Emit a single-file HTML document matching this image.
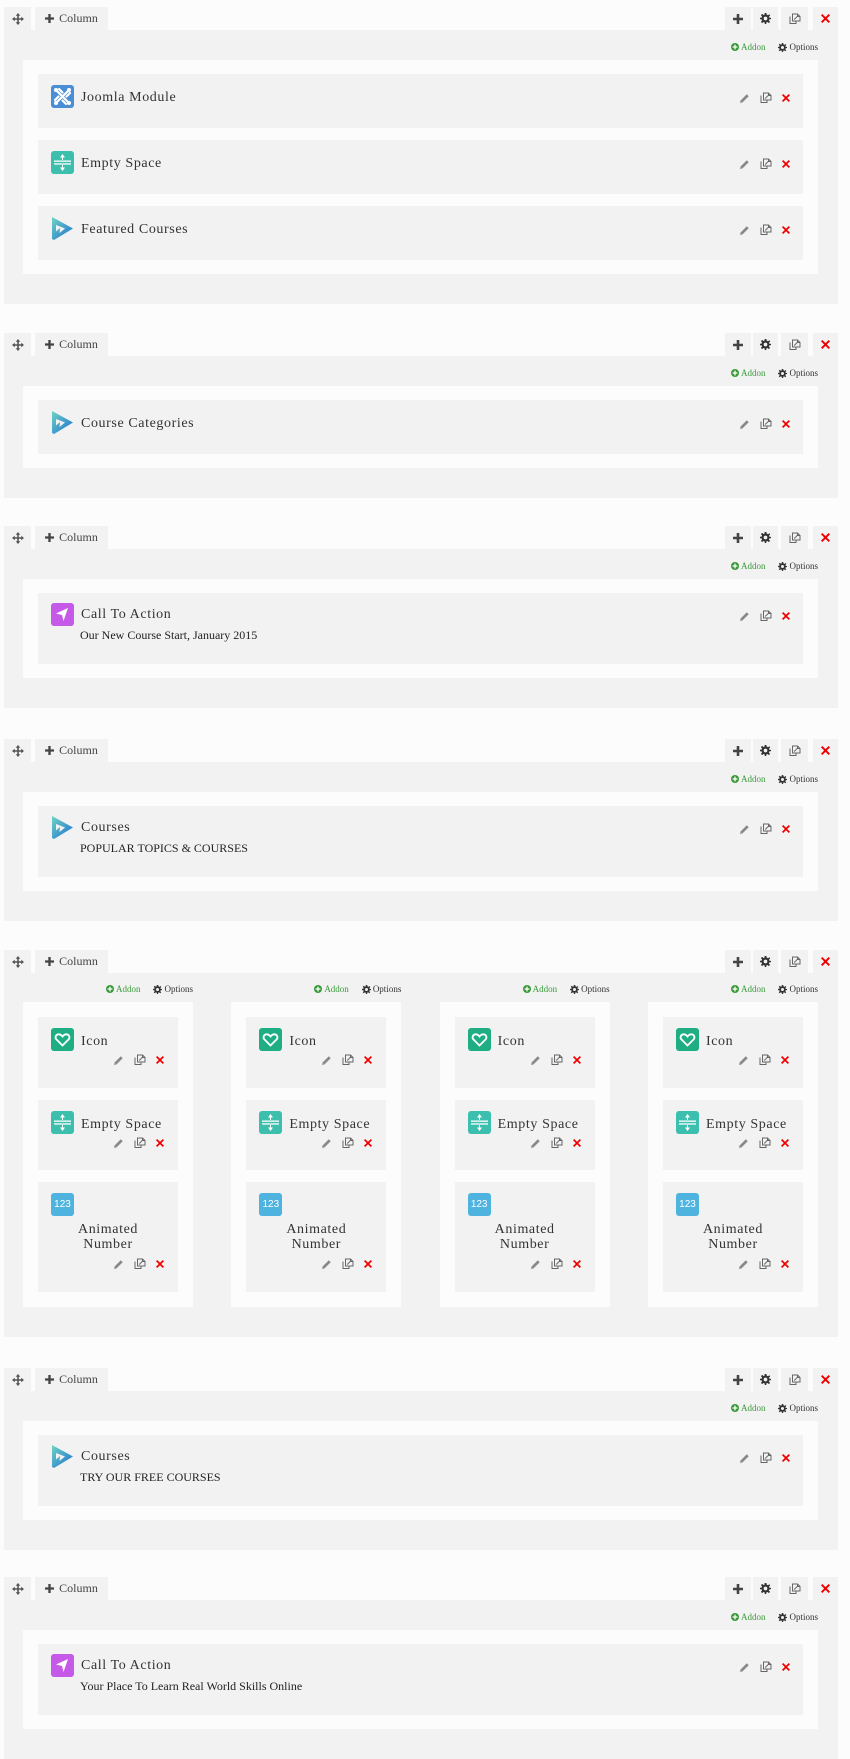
<!DOCTYPE html>
<html><head><meta charset="utf-8">
<style>
*{margin:0;padding:0;box-sizing:border-box}
body{width:850px;height:1758px;background:#fcfcfc;position:relative;overflow:hidden;font-family:"Liberation Serif",serif;color:#333}
.sec{position:absolute;left:0;width:850px}
.tab{position:absolute;top:0;height:23px;background:#f2f2f2;display:flex;align-items:center;justify-content:center;font-size:12px;color:#444}
.panel{position:absolute;left:4px;top:23px;width:834px;background:#f2f2f2;padding:30px 20px 30px 19px}
.ar{position:absolute;right:20px;top:12px;font-size:9px;display:flex;gap:13px;align-items:center;white-space:nowrap}
.ar span{display:flex;align-items:center;gap:2px}
.ad{color:#3a9a3a}
.wb{background:#fcfcfc;padding:14px 15px}
.it{position:relative;background:#f2f2f2;height:54px;margin-bottom:12px}
.it:last-child{margin-bottom:0}
.it.s{height:71px}
.ico{position:absolute;left:13px;top:11px;width:23px;height:23px}
.t{position:absolute;left:43px;top:16px;font-size:14px;letter-spacing:.6px;line-height:16px;white-space:nowrap}
.it.s .t{top:14px}
.sub{position:absolute;left:42px;top:35px;font-size:12px;line-height:14px;white-space:nowrap;color:#222}
.acts{position:absolute;right:13px;top:18px;display:flex;gap:10px;align-items:center}
.it.s .acts{top:17px}
.cols{display:flex;justify-content:space-between}
.col{position:relative;width:170px}
.col .ar{right:0;top:-18px}
.col .it{height:71px}
.col .t{top:17px}
.col .acts{right:14px;top:37px}
.col .it.n{height:110px}
.an{position:absolute;left:0;right:0;top:40px;text-align:center;font-size:14px;letter-spacing:.6px;line-height:15px}
.col .it.n .acts{top:76px}
</style></head><body>
<svg width="0" height="0" style="position:absolute">
<defs>
<symbol id="mv" viewBox="0 0 12 12"><path d="M6 0L8.3 2.8H6.8V5.2H9.2V3.7L12 6L9.2 8.3V6.8H6.8V9.2H8.3L6 12L3.7 9.2H5.2V6.8H2.8V8.3L0 6L2.8 3.7V5.2H5.2V2.8H3.7Z" fill="#555"/></symbol>
<symbol id="pl" viewBox="0 0 10 10"><path d="M3.7 0H6.3V3.7H10V6.3H6.3V10H3.7V6.3H0V3.7H3.7Z" fill="#444"/></symbol>
<symbol id="gr" viewBox="0 0 12 12"><path d="M5 0H7L7.3 1.8L8.8 2.5L10.2 1.3L11.1 2.7L9.8 4L10.2 5.2L12 5.3V6.7L10.2 7L9.7 8.3L11 9.7L9.7 11L8.3 9.8L7 10.2L6.8 12H5.2L5 10.2L3.7 9.8L2.3 11L1 9.7L2.2 8.3L1.8 7L0 6.8V5.2L1.8 5L2.2 3.7L1 2.3L2.3 1L3.7 2.2L5 1.8Z M6 4A2 2 0 1 0 6 8A2 2 0 1 0 6 4Z" fill="#333" fill-rule="evenodd"/></symbol>
<symbol id="cp" viewBox="0 0 12 12"><path d="M1 3.5V10.5H7V8M3.5 1H8.5L11 3.5V8H3.5ZM8.5 1V3.5H11" fill="none" stroke="#666" stroke-width="1"/><path d="M5.2 6.5L8.5 3.2" stroke="#666"/></symbol>
<symbol id="pe" viewBox="0 0 12 12"><path d="M1 11L1.6 8.3L8.5 1.4L10.6 3.5L3.7 10.4Z" fill="#888"/><path d="M1 11L1.6 8.3L3.7 10.4Z" fill="#aaa"/></symbol>
<symbol id="xx" viewBox="0 0 10 10"><path d="M1.5 0L5 3.5L8.5 0L10 1.5L6.5 5L10 8.5L8.5 10L5 6.5L1.5 10L0 8.5L3.5 5L0 1.5Z" fill="#e00"/></symbol>
<symbol id="ad" viewBox="0 0 10 10"><circle cx="5" cy="5" r="5" fill="#3a9a3a"/><path d="M4.2 2H5.8V4.2H8V5.8H5.8V8H4.2V5.8H2V4.2H4.2Z" fill="#fff"/></symbol>
<symbol id="jm" viewBox="0 0 23 23"><rect width="23" height="23" rx="3" fill="#4a8fd6"/><g stroke="#fff" stroke-width="2.2" fill="none" stroke-linecap="round"><path d="M6 6L17 17M17 6L6 17M8 4L11.5 7.5M19 8L15.5 11.5M15 19L11.5 15.5M4 15L7.5 11.5"/></g><g fill="#fff"><circle cx="5" cy="5" r="2"/><circle cx="18" cy="5" r="2"/><circle cx="5" cy="18" r="2"/><circle cx="18" cy="18" r="2"/></g></symbol>
<symbol id="es" viewBox="0 0 23 23"><rect width="23" height="23" rx="3" fill="#3dbfae"/><g fill="#fff"><rect x="3" y="9.5" width="17" height="1.3"/><rect x="3" y="12.3" width="17" height="1.3"/><path d="M11.5 3L14 6.5H9Z M11.5 20L14 16.5H9Z"/><rect x="11" y="6" width="1" height="3"/><rect x="11" y="14" width="1" height="3"/></g></symbol>
<symbol id="fc" viewBox="0 0 23 23"><defs><linearGradient id="g1" x1="0" y1="0" x2="1" y2="1"><stop offset="0" stop-color="#6fd4c4"/><stop offset="1" stop-color="#1d6fd0"/></linearGradient></defs><path d="M1 0L22 11.5L3 23L1 22Z M5 8V14.5L9 11L8.5 16L14 11.5Z" fill="url(#g1)" fill-rule="evenodd"/></symbol>
<symbol id="ca" viewBox="0 0 23 23"><rect width="23" height="23" rx="3" fill="#c65ae8"/><path d="M17 5L5 10.5L11 12L12.5 18Z" fill="#fff"/></symbol>
<symbol id="ht" viewBox="0 0 23 23"><rect width="23" height="23" rx="3" fill="#1fae84"/><path d="M11.5 17.5L5.5 11.5C3.8 9.8 4.5 6.5 7.5 6.3C9.3 6.2 10.6 7.3 11.5 8.5C12.4 7.3 13.7 6.2 15.5 6.3C18.5 6.5 19.2 9.8 17.5 11.5Z" fill="none" stroke="#fff" stroke-width="1.8"/></symbol>
</defs></svg>

<div class="sec" style="top:7px">
<div class="tab" style="left:4px;width:27px"><svg width="12" height="12"><use href="#mv"/></svg></div>
<div class="tab" style="left:35px;width:73px;gap:5px"><svg width="9" height="9"><use href="#pl"/></svg>Column</div>
<div class="tab" style="left:725px;width:26px"><svg width="10" height="10"><use href="#pl"/></svg></div>
<div class="tab" style="left:753px;width:25px"><svg width="11" height="11"><use href="#gr"/></svg></div>
<div class="tab" style="left:781px;width:27px"><svg width="12" height="12"><use href="#cp"/></svg></div>
<div class="tab" style="left:813px;width:25px"><svg width="9" height="9"><use href="#xx"/></svg></div>
<div class="panel"><div class="ar"><span class="ad"><svg width="8" height="8"><use href="#ad"/></svg>Addon</span><span><svg width="9" height="9"><use href="#gr"/></svg>Options</span></div>
<div class="wb">
<div class="it"><svg class="ico"><use href="#jm"/></svg><div class="t">Joomla Module</div><div class="acts"><svg width="11" height="11"><use href="#pe"/></svg><svg width="12" height="12"><use href="#cp"/></svg><svg width="8" height="8"><use href="#xx"/></svg></div></div>
<div class="it"><svg class="ico"><use href="#es"/></svg><div class="t">Empty Space</div><div class="acts"><svg width="11" height="11"><use href="#pe"/></svg><svg width="12" height="12"><use href="#cp"/></svg><svg width="8" height="8"><use href="#xx"/></svg></div></div>
<div class="it"><svg class="ico"><use href="#fc"/></svg><div class="t">Featured Courses</div><div class="acts"><svg width="11" height="11"><use href="#pe"/></svg><svg width="12" height="12"><use href="#cp"/></svg><svg width="8" height="8"><use href="#xx"/></svg></div></div>
</div></div></div>

<div class="sec" style="top:333px">
<div class="tab" style="left:4px;width:27px"><svg width="12" height="12"><use href="#mv"/></svg></div>
<div class="tab" style="left:35px;width:73px;gap:5px"><svg width="9" height="9"><use href="#pl"/></svg>Column</div>
<div class="tab" style="left:725px;width:26px"><svg width="10" height="10"><use href="#pl"/></svg></div>
<div class="tab" style="left:753px;width:25px"><svg width="11" height="11"><use href="#gr"/></svg></div>
<div class="tab" style="left:781px;width:27px"><svg width="12" height="12"><use href="#cp"/></svg></div>
<div class="tab" style="left:813px;width:25px"><svg width="9" height="9"><use href="#xx"/></svg></div>
<div class="panel"><div class="ar"><span class="ad"><svg width="8" height="8"><use href="#ad"/></svg>Addon</span><span><svg width="9" height="9"><use href="#gr"/></svg>Options</span></div>
<div class="wb">
<div class="it"><svg class="ico"><use href="#fc"/></svg><div class="t">Course Categories</div><div class="acts"><svg width="11" height="11"><use href="#pe"/></svg><svg width="12" height="12"><use href="#cp"/></svg><svg width="8" height="8"><use href="#xx"/></svg></div></div>
</div></div></div>

<div class="sec" style="top:526px">
<div class="tab" style="left:4px;width:27px"><svg width="12" height="12"><use href="#mv"/></svg></div>
<div class="tab" style="left:35px;width:73px;gap:5px"><svg width="9" height="9"><use href="#pl"/></svg>Column</div>
<div class="tab" style="left:725px;width:26px"><svg width="10" height="10"><use href="#pl"/></svg></div>
<div class="tab" style="left:753px;width:25px"><svg width="11" height="11"><use href="#gr"/></svg></div>
<div class="tab" style="left:781px;width:27px"><svg width="12" height="12"><use href="#cp"/></svg></div>
<div class="tab" style="left:813px;width:25px"><svg width="9" height="9"><use href="#xx"/></svg></div>
<div class="panel"><div class="ar"><span class="ad"><svg width="8" height="8"><use href="#ad"/></svg>Addon</span><span><svg width="9" height="9"><use href="#gr"/></svg>Options</span></div>
<div class="wb">
<div class="it s"><svg class="ico" style="top:10px"><use href="#ca"/></svg><div class="t">Call To Action</div><div class="sub">Our New Course Start, January 2015</div><div class="acts"><svg width="11" height="11"><use href="#pe"/></svg><svg width="12" height="12"><use href="#cp"/></svg><svg width="8" height="8"><use href="#xx"/></svg></div></div>
</div></div></div>

<div class="sec" style="top:739px">
<div class="tab" style="left:4px;width:27px"><svg width="12" height="12"><use href="#mv"/></svg></div>
<div class="tab" style="left:35px;width:73px;gap:5px"><svg width="9" height="9"><use href="#pl"/></svg>Column</div>
<div class="tab" style="left:725px;width:26px"><svg width="10" height="10"><use href="#pl"/></svg></div>
<div class="tab" style="left:753px;width:25px"><svg width="11" height="11"><use href="#gr"/></svg></div>
<div class="tab" style="left:781px;width:27px"><svg width="12" height="12"><use href="#cp"/></svg></div>
<div class="tab" style="left:813px;width:25px"><svg width="9" height="9"><use href="#xx"/></svg></div>
<div class="panel"><div class="ar"><span class="ad"><svg width="8" height="8"><use href="#ad"/></svg>Addon</span><span><svg width="9" height="9"><use href="#gr"/></svg>Options</span></div>
<div class="wb">
<div class="it s"><svg class="ico" style="top:10px"><use href="#fc"/></svg><div class="t">Courses</div><div class="sub">POPULAR TOPICS &amp; COURSES</div><div class="acts"><svg width="11" height="11"><use href="#pe"/></svg><svg width="12" height="12"><use href="#cp"/></svg><svg width="8" height="8"><use href="#xx"/></svg></div></div>
</div></div></div>

<div class="sec" style="top:950px">
<div class="tab" style="left:4px;width:27px"><svg width="12" height="12"><use href="#mv"/></svg></div>
<div class="tab" style="left:35px;width:73px;gap:5px"><svg width="9" height="9"><use href="#pl"/></svg>Column</div>
<div class="tab" style="left:725px;width:26px"><svg width="10" height="10"><use href="#pl"/></svg></div>
<div class="tab" style="left:753px;width:25px"><svg width="11" height="11"><use href="#gr"/></svg></div>
<div class="tab" style="left:781px;width:27px"><svg width="12" height="12"><use href="#cp"/></svg></div>
<div class="tab" style="left:813px;width:25px"><svg width="9" height="9"><use href="#xx"/></svg></div>
<div class="panel" style="padding-top:29px"><div class="cols">
<div class="col"><div class="ar"><span class="ad"><svg width="8" height="8"><use href="#ad"/></svg>Addon</span><span><svg width="9" height="9"><use href="#gr"/></svg>Options</span></div><div class="wb" style="padding:15px">
<div class="it"><svg class="ico"><use href="#ht"/></svg><div class="t">Icon</div><div class="acts"><svg width="11" height="11"><use href="#pe"/></svg><svg width="12" height="12"><use href="#cp"/></svg><svg width="8" height="8"><use href="#xx"/></svg></div></div>
<div class="it" style="height:70px"><svg class="ico"><use href="#es"/></svg><div class="t">Empty Space</div><div class="acts"><svg width="11" height="11"><use href="#pe"/></svg><svg width="12" height="12"><use href="#cp"/></svg><svg width="8" height="8"><use href="#xx"/></svg></div></div>
<div class="it n"><div class="ico" style="background:#4fb3e0;border-radius:3px;color:#fff;font:10px 'Liberation Sans',sans-serif;line-height:23px;text-align:center">123</div><div class="an">Animated<br>Number</div><div class="acts"><svg width="11" height="11"><use href="#pe"/></svg><svg width="12" height="12"><use href="#cp"/></svg><svg width="8" height="8"><use href="#xx"/></svg></div></div>
</div></div>
<div class="col"><div class="ar"><span class="ad"><svg width="8" height="8"><use href="#ad"/></svg>Addon</span><span><svg width="9" height="9"><use href="#gr"/></svg>Options</span></div><div class="wb" style="padding:15px">
<div class="it"><svg class="ico"><use href="#ht"/></svg><div class="t">Icon</div><div class="acts"><svg width="11" height="11"><use href="#pe"/></svg><svg width="12" height="12"><use href="#cp"/></svg><svg width="8" height="8"><use href="#xx"/></svg></div></div>
<div class="it" style="height:70px"><svg class="ico"><use href="#es"/></svg><div class="t">Empty Space</div><div class="acts"><svg width="11" height="11"><use href="#pe"/></svg><svg width="12" height="12"><use href="#cp"/></svg><svg width="8" height="8"><use href="#xx"/></svg></div></div>
<div class="it n"><div class="ico" style="background:#4fb3e0;border-radius:3px;color:#fff;font:10px 'Liberation Sans',sans-serif;line-height:23px;text-align:center">123</div><div class="an">Animated<br>Number</div><div class="acts"><svg width="11" height="11"><use href="#pe"/></svg><svg width="12" height="12"><use href="#cp"/></svg><svg width="8" height="8"><use href="#xx"/></svg></div></div>
</div></div>
<div class="col"><div class="ar"><span class="ad"><svg width="8" height="8"><use href="#ad"/></svg>Addon</span><span><svg width="9" height="9"><use href="#gr"/></svg>Options</span></div><div class="wb" style="padding:15px">
<div class="it"><svg class="ico"><use href="#ht"/></svg><div class="t">Icon</div><div class="acts"><svg width="11" height="11"><use href="#pe"/></svg><svg width="12" height="12"><use href="#cp"/></svg><svg width="8" height="8"><use href="#xx"/></svg></div></div>
<div class="it" style="height:70px"><svg class="ico"><use href="#es"/></svg><div class="t">Empty Space</div><div class="acts"><svg width="11" height="11"><use href="#pe"/></svg><svg width="12" height="12"><use href="#cp"/></svg><svg width="8" height="8"><use href="#xx"/></svg></div></div>
<div class="it n"><div class="ico" style="background:#4fb3e0;border-radius:3px;color:#fff;font:10px 'Liberation Sans',sans-serif;line-height:23px;text-align:center">123</div><div class="an">Animated<br>Number</div><div class="acts"><svg width="11" height="11"><use href="#pe"/></svg><svg width="12" height="12"><use href="#cp"/></svg><svg width="8" height="8"><use href="#xx"/></svg></div></div>
</div></div>
<div class="col"><div class="ar"><span class="ad"><svg width="8" height="8"><use href="#ad"/></svg>Addon</span><span><svg width="9" height="9"><use href="#gr"/></svg>Options</span></div><div class="wb" style="padding:15px">
<div class="it"><svg class="ico"><use href="#ht"/></svg><div class="t">Icon</div><div class="acts"><svg width="11" height="11"><use href="#pe"/></svg><svg width="12" height="12"><use href="#cp"/></svg><svg width="8" height="8"><use href="#xx"/></svg></div></div>
<div class="it" style="height:70px"><svg class="ico"><use href="#es"/></svg><div class="t">Empty Space</div><div class="acts"><svg width="11" height="11"><use href="#pe"/></svg><svg width="12" height="12"><use href="#cp"/></svg><svg width="8" height="8"><use href="#xx"/></svg></div></div>
<div class="it n"><div class="ico" style="background:#4fb3e0;border-radius:3px;color:#fff;font:10px 'Liberation Sans',sans-serif;line-height:23px;text-align:center">123</div><div class="an">Animated<br>Number</div><div class="acts"><svg width="11" height="11"><use href="#pe"/></svg><svg width="12" height="12"><use href="#cp"/></svg><svg width="8" height="8"><use href="#xx"/></svg></div></div>
</div></div>
</div></div></div>

<div class="sec" style="top:1368px">
<div class="tab" style="left:4px;width:27px"><svg width="12" height="12"><use href="#mv"/></svg></div>
<div class="tab" style="left:35px;width:73px;gap:5px"><svg width="9" height="9"><use href="#pl"/></svg>Column</div>
<div class="tab" style="left:725px;width:26px"><svg width="10" height="10"><use href="#pl"/></svg></div>
<div class="tab" style="left:753px;width:25px"><svg width="11" height="11"><use href="#gr"/></svg></div>
<div class="tab" style="left:781px;width:27px"><svg width="12" height="12"><use href="#cp"/></svg></div>
<div class="tab" style="left:813px;width:25px"><svg width="9" height="9"><use href="#xx"/></svg></div>
<div class="panel"><div class="ar"><span class="ad"><svg width="8" height="8"><use href="#ad"/></svg>Addon</span><span><svg width="9" height="9"><use href="#gr"/></svg>Options</span></div>
<div class="wb">
<div class="it s"><svg class="ico" style="top:10px"><use href="#fc"/></svg><div class="t">Courses</div><div class="sub">TRY OUR FREE COURSES</div><div class="acts"><svg width="11" height="11"><use href="#pe"/></svg><svg width="12" height="12"><use href="#cp"/></svg><svg width="8" height="8"><use href="#xx"/></svg></div></div>
</div></div></div>

<div class="sec" style="top:1577px">
<div class="tab" style="left:4px;width:27px"><svg width="12" height="12"><use href="#mv"/></svg></div>
<div class="tab" style="left:35px;width:73px;gap:5px"><svg width="9" height="9"><use href="#pl"/></svg>Column</div>
<div class="tab" style="left:725px;width:26px"><svg width="10" height="10"><use href="#pl"/></svg></div>
<div class="tab" style="left:753px;width:25px"><svg width="11" height="11"><use href="#gr"/></svg></div>
<div class="tab" style="left:781px;width:27px"><svg width="12" height="12"><use href="#cp"/></svg></div>
<div class="tab" style="left:813px;width:25px"><svg width="9" height="9"><use href="#xx"/></svg></div>
<div class="panel"><div class="ar"><span class="ad"><svg width="8" height="8"><use href="#ad"/></svg>Addon</span><span><svg width="9" height="9"><use href="#gr"/></svg>Options</span></div>
<div class="wb">
<div class="it s"><svg class="ico" style="top:10px"><use href="#ca"/></svg><div class="t">Call To Action</div><div class="sub">Your Place To Learn Real World Skills Online</div><div class="acts"><svg width="11" height="11"><use href="#pe"/></svg><svg width="12" height="12"><use href="#cp"/></svg><svg width="8" height="8"><use href="#xx"/></svg></div></div>
</div></div></div>
</body></html>
